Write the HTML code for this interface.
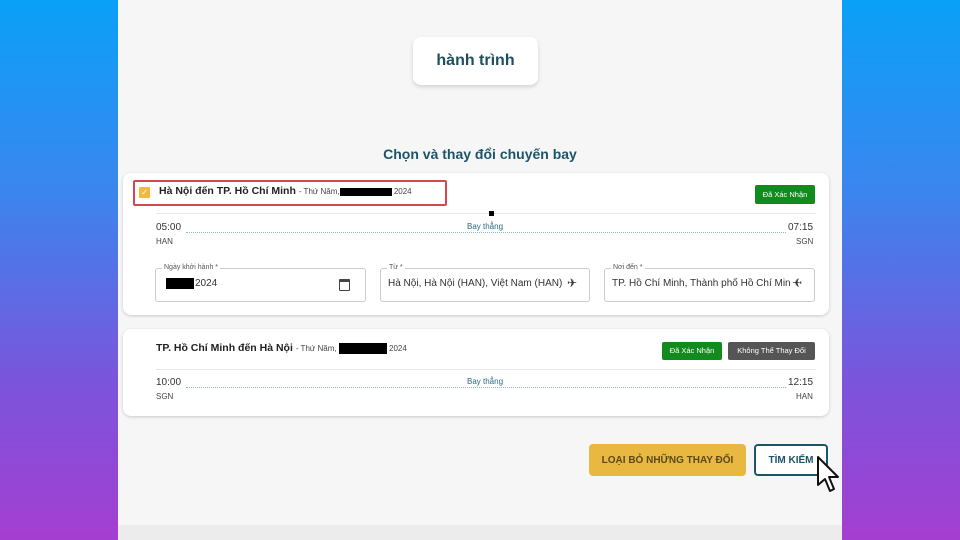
<!DOCTYPE html>
<html><head><meta charset="utf-8"><style>
*{margin:0;padding:0;box-sizing:border-box}
body{width:960px;height:540px;overflow:hidden;position:relative;font-family:"Liberation Sans",sans-serif;background:linear-gradient(180deg,#0aa0f8 0%,#3a86ee 35%,#7a55dc 70%,#a43ed0 100%)}
.abs{position:absolute}
.panel{left:118px;top:0;width:724px;height:540px;background:#f6f6f6}
.strip{left:118px;top:525px;width:724px;height:15px;background:#ececec}
.pill{left:413px;top:37px;width:125px;height:48px;background:#fff;border-radius:8px;box-shadow:0 2px 4px rgba(0,0,0,.15);color:#1d4f5e;font-size:16px;font-weight:bold;text-align:center;line-height:48px}
.h{left:0;width:960px;top:146px;text-align:center;color:#1d5468;font-size:14px;font-weight:bold}
.card{background:#fff;border-radius:8px;box-shadow:0 1px 3px rgba(0,0,0,.18)}
.t{font-size:10px;color:#333}
.b{font-size:10.5px;font-weight:bold;color:#222;white-space:nowrap}
.b .s{font-weight:normal;font-size:8px;color:#444}
.b .k{display:inline-block;background:#000;height:8px;vertical-align:middle}
.small{font-size:8px;color:#444}
.badge{font-size:7.5px;color:#fff;border-radius:2px;text-align:center}
.dot{border-top:1px dotted #8fb8c4}
.field{border:1px solid #ccc;border-radius:3px;background:#fff;height:34px}
.lbl{font-size:7px;color:#555;background:#fff;padding:0 2px}
.blk{background:#000}
</style></head><body>
<div class="abs panel"></div>
<div class="abs strip"></div>
<div class="abs pill">hành trình</div>
<div class="abs h">Chọn và thay đổi chuyến bay</div>

<div class="abs card" style="left:123px;top:173px;width:706px;height:142px"></div>
<div class="abs" style="left:133px;top:180px;width:314px;height:26px;border:2px solid #d9454f;border-radius:2px;background:#fff"></div>
<div class="abs" style="left:139px;top:187px;width:11px;height:11px;background:#f2b840;border-radius:1px;color:#fff;font-size:8px;line-height:11px;text-align:center">✓</div>
<div class="abs b" style="left:159px;top:185px">Hà Nội đến TP. Hồ Chí Minh <span class="s">- Thứ Năm,<span class="k" style="width:52px"></span> 2024</span></div>
<div class="abs badge" style="left:755px;top:185px;width:60px;height:19px;line-height:19px;background:#118a1e">Đã Xác Nhận</div>
<div class="abs" style="left:156px;top:213px;width:660px;border-top:1px solid #e6e6e6"></div>
<div class="abs blk" style="left:489px;top:211px;width:5px;height:5px"></div>
<div class="abs t" style="left:156px;top:222px">05:00</div>
<div class="abs small" style="left:156px;top:237px">HAN</div>
<div class="abs small" style="left:467px;top:222px;color:#2a6b80">Bay thẳng</div>
<div class="abs dot" style="left:186px;top:232px;width:600px"></div>
<div class="abs t" style="left:788px;top:222px">07:15</div>
<div class="abs small" style="left:796px;top:237px">SGN</div>

<div class="abs field" style="left:155px;top:268px;width:211px"></div>
<div class="abs lbl" style="left:162px;top:264px">Ngày khởi hành *</div>
<div class="abs blk" style="left:166px;top:278px;width:28px;height:11px"></div>
<div class="abs t" style="left:195px;top:278px">2024</div>
<div class="abs" style="left:339px;top:279px;width:11px;height:12px;border:1.5px solid #444;border-top-width:3px;border-radius:1px"></div>
<div class="abs field" style="left:380px;top:268px;width:210px"></div>
<div class="abs lbl" style="left:387px;top:264px">Từ *</div>
<div class="abs t" style="left:388px;top:278px;width:178px;white-space:nowrap;overflow:hidden">Hà Nội, Hà Nội (HAN), Việt Nam (HAN)</div>
<div class="abs" style="left:567px;top:276px;font-size:12px;color:#333">✈</div>
<div class="abs field" style="left:604px;top:268px;width:211px"></div>
<div class="abs lbl" style="left:611px;top:264px">Nơi đến *</div>
<div class="abs t" style="left:612px;top:278px;width:178px;white-space:nowrap;overflow:hidden">TP. Hồ Chí Minh, Thành phố Hồ Chí Minh</div>
<div class="abs" style="left:792px;top:276px;font-size:12px;color:#333;transform:scaleX(-1)">✈</div>

<div class="abs card" style="left:123px;top:329px;width:706px;height:87px"></div>
<div class="abs b" style="left:156px;top:342px">TP. Hồ Chí Minh đến Hà Nội <span class="s">- Thứ Năm, <span class="k" style="width:48px;height:11px"></span> 2024</span></div>
<div class="abs badge" style="left:662px;top:342px;width:60px;height:18px;line-height:18px;background:#118a1e">Đã Xác Nhận</div>
<div class="abs badge" style="left:728px;top:342px;width:87px;height:18px;line-height:18px;background:#555">Không Thể Thay Đổi</div>
<div class="abs" style="left:156px;top:369px;width:660px;border-top:1px solid #e6e6e6"></div>
<div class="abs t" style="left:156px;top:377px">10:00</div>
<div class="abs small" style="left:156px;top:392px">SGN</div>
<div class="abs small" style="left:467px;top:377px;color:#2a6b80">Bay thẳng</div>
<div class="abs dot" style="left:186px;top:387px;width:600px"></div>
<div class="abs t" style="left:788px;top:377px">12:15</div>
<div class="abs small" style="left:796px;top:392px">HAN</div>

<div class="abs" style="left:589px;top:444px;width:157px;height:32px;background:#e8b840;border-radius:4px;color:#5a4a1a;font-size:10px;font-weight:bold;text-align:center;line-height:34px">LOẠI BỎ NHỮNG THAY ĐỔI</div>
<div class="abs" style="left:754px;top:444px;width:74px;height:32px;border:2px solid #1d5468;border-radius:4px;background:#fff;color:#1d5468;font-size:10px;font-weight:bold;text-align:center;line-height:30px">TÌM KIẾM</div>
<svg class="abs" style="left:816px;top:455px" width="26" height="40" viewBox="0 0 26 40"><path d="M2 2 L2 30 L9 24 L14 36 L18 34 L13 22 L22 22 Z" fill="#fff" stroke="#111" stroke-width="2" stroke-linejoin="round"/></svg>
</body></html>
